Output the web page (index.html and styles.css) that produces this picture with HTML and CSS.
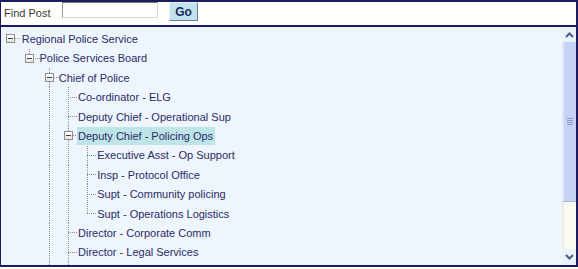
FILE: index.html
```html
<!DOCTYPE html>
<html lang="en">
<head>
  <meta charset="UTF-8" />
  <title>Find Post</title>
  <link rel="stylesheet" href="styles.css">
</head>
<body>
  <div class="frame">
    <div class="search-bar">
      <label class="search-label" for="post">Find Post</label>
      <input id="post" class="search-input" type="text">
      <button class="go-btn">Go</button>
    </div>

    <div class="tree-panel">
      <div class="tree">
        <div class="row">
          <span class="cell node"><i class="toggle"></i></span>
          <span class="label root">Regional Police Service</span>
        </div>
        <div class="row">
          <span class="cell"></span>
          <span class="cell node up"><i class="toggle"></i></span>
          <span class="label">Police Services Board</span>
        </div>
        <div class="row">
          <span class="cell"></span><span class="cell"></span>
          <span class="cell node both"><i class="toggle"></i></span>
          <span class="label">Chief of Police</span>
        </div>
        <div class="row">
          <span class="cell"></span><span class="cell"></span><span class="cell line"></span>
          <span class="cell tee"></span>
          <span class="label">Co-ordinator - ELG</span>
        </div>
        <div class="row">
          <span class="cell"></span><span class="cell"></span><span class="cell line"></span>
          <span class="cell tee"></span>
          <span class="label">Deputy Chief - Operational Sup</span>
        </div>
        <div class="row">
          <span class="cell"></span><span class="cell"></span><span class="cell line"></span>
          <span class="cell node both"><i class="toggle"></i></span>
          <span class="label selected">Deputy Chief - Policing Ops</span>
        </div>
        <div class="row">
          <span class="cell"></span><span class="cell"></span><span class="cell line"></span><span class="cell line"></span>
          <span class="cell tee"></span>
          <span class="label">Executive Asst - Op Support</span>
        </div>
        <div class="row">
          <span class="cell"></span><span class="cell"></span><span class="cell line"></span><span class="cell line"></span>
          <span class="cell tee"></span>
          <span class="label">Insp - Protocol Office</span>
        </div>
        <div class="row">
          <span class="cell"></span><span class="cell"></span><span class="cell line"></span><span class="cell line"></span>
          <span class="cell tee"></span>
          <span class="label">Supt - Community policing</span>
        </div>
        <div class="row">
          <span class="cell"></span><span class="cell"></span><span class="cell line"></span><span class="cell line"></span>
          <span class="cell end"></span>
          <span class="label">Supt - Operations Logistics</span>
        </div>
        <div class="row">
          <span class="cell"></span><span class="cell"></span><span class="cell line"></span>
          <span class="cell tee"></span>
          <span class="label">Director - Corporate Comm</span>
        </div>
        <div class="row">
          <span class="cell"></span><span class="cell"></span><span class="cell line"></span>
          <span class="cell tee"></span>
          <span class="label">Director - Legal Services</span>
        </div>
        <div class="row">
          <span class="cell"></span><span class="cell"></span><span class="cell line"></span>
          <span class="cell line"></span>
        </div>
      </div>

      <!-- fake scrollbar -->
      <div class="scrollbar">
        <div class="sb-btn">
          <svg width="9" height="6" viewBox="0 0 9 6"><polyline points="1,5 4.5,1.5 8,5" fill="none" stroke="#4b5b85" stroke-width="2"/></svg>
        </div>
        <div class="sb-thumb"><span class="grip"></span></div>
        <div class="sb-track"></div>
        <div class="sb-btn down">
          <svg width="9" height="6" viewBox="0 0 9 6"><polyline points="1,1 4.5,4.5 8,1" fill="none" stroke="#4b5b85" stroke-width="2"/></svg>
        </div>
      </div>
    </div>
  </div>
</body>
</html>
```

FILE: styles.css
```css
* {
  margin: 0;
  padding: 0;
  box-sizing: border-box;
}

:root {
  --dots-v: repeating-linear-gradient(to bottom, #8e8e8e 0 1px, transparent 1px 2px);
  --dots-h: repeating-linear-gradient(to right, #8e8e8e 0 1px, transparent 1px 2px);
}

body {
  background: #fff;
  font-family: "Liberation Sans", Arial, sans-serif;
  font-size: 11px;
}

.frame {
  width: 578px;
  height: 267px;
  border: 2px solid #1b1b5e;
  border-left-width: 1px;
  display: flex;
  flex-direction: column;
}

.search-bar {
  height: 25px;
  flex: none;
  background: #fffffb;
  border-bottom: 2px solid #1b1b5e;
  display: flex;
  align-items: flex-start;
  padding-left: 3px;
}

.search-label {
  width: 58px;
  margin-top: 4px;
  line-height: 14px;
  color: #3a3a3a;
}

.search-input {
  width: 96px;
  height: 16px;
  border: 1px solid;
  border-color: #7a7a7a #d8d8d8 #d8d8d8 #9a9a9a;
  background: #fff;
  outline: none;
}

.go-btn {
  margin-left: 11px;
  width: 29px;
  height: 19px;
  background: #c2e2ee;
  border: 1px solid;
  border-color: #e6f3f8 #6f7f99 #6f7f99 #e6f3f8;
  font: bold 12px "Liberation Sans", Arial, sans-serif;
  color: #1d2b5c;
  cursor: pointer;
}

.tree-panel {
  flex: 1;
  min-height: 0;
  display: flex;
  background: #eef5fd;
}

.tree {
  flex: 1;
  overflow: hidden;
  padding-top: 2.3px;
}

.row {
  display: flex;
  align-items: center;
  height: 19.4px;
}

.cell {
  flex: none;
  width: 19.25px;
  height: 100%;
  display: flex;
  align-items: center;
  background-repeat: no-repeat;
}

.line {
  background-image: var(--dots-v);
  background-size: 1px 100%;
  background-position: 9px 0;
}

.tee {
  background-image: var(--dots-v), var(--dots-h);
  background-size: 1px 100%, 10.25px 1px;
  background-position: 9px 0, 9px 50%;
}

.end {
  background-image: var(--dots-v), var(--dots-h);
  background-size: 1px 50%, 10.25px 1px;
  background-position: 9px 0, 9px 50%;
}

.node {
  background-image: var(--dots-h);
  background-size: 5px 1px;
  background-position: right 50%;
}

.node.up {
  background-image: var(--dots-h), var(--dots-v);
  background-size: 5px 1px, 1px 50%;
  background-position: right 50%, 9px 0;
}

.node.both {
  background-image: var(--dots-h), var(--dots-v);
  background-size: 5px 1px, 1px 100%;
  background-position: right 50%, 9px 0;
}

.toggle {
  width: 9px;
  height: 9px;
  margin-left: 5px;
  border: 1px solid #8f8f8f;
  background:
    linear-gradient(#404040, #404040) center / 5px 1px no-repeat,
    linear-gradient(#fff, #e2e2e2);
}

.label {
  margin-left: -1px;
  padding: 0 2px 0 1px;
  line-height: 18px;
  color: #2b2b66;
  white-space: nowrap;
}

.label.root {
  margin-left: 0.5px;
}

.label.selected {
  background: #bfe4e8;
}

.scrollbar {
  width: 14px;
  flex: none;
  display: flex;
  flex-direction: column;
}

.sb-btn {
  height: 15px;
  display: flex;
  align-items: center;
  justify-content: center;
  background: #eaf2fc;
}

.sb-btn.down {
  height: 16px;
}

.sb-thumb {
  height: 160px;
  background: #c4d3f6;
  border-left: 2px solid #dde6fa;
  border-bottom: 1px solid #a7b4d6;
  display: flex;
  align-items: center;
  justify-content: center;
}

.grip {
  width: 6px;
  height: 7px;
  background: repeating-linear-gradient(to bottom, #8d9dc8 0 1px, transparent 1px 2px);
}

.sb-track {
  flex: 1;
  background: #fafaf0;
  border-left: 2px solid #ececdf;
}
```
